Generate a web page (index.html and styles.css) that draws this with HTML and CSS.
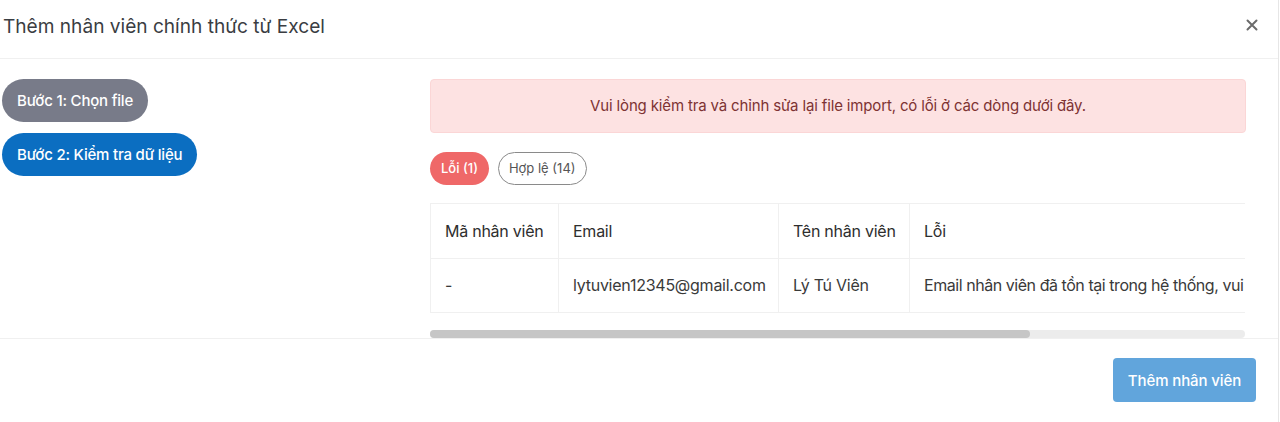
FILE: index.html
```html
<!DOCTYPE html>
<html lang="vi">
<head>
<meta charset="utf-8">
<title>Thêm nhân viên chính thức từ Excel</title>
<link rel="stylesheet" href="styles.css">
</head>
<body>
<div class="modal">
  <header class="modal-header">
    <h1 class="modal-title">Thêm nhân viên chính thức từ Excel</h1>
    <button class="close" aria-label="Đóng">
      <svg width="12" height="12" viewBox="0 0 12 12"><path d="M1.5 1.5 L10.5 10.5 M10.5 1.5 L1.5 10.5" stroke="#6b6b6b" stroke-width="2" stroke-linecap="round"/></svg>
    </button>
  </header>
  <section class="modal-body">
    <nav class="steps">
      <div class="step step-done">Bước 1: Chọn file</div>
      <div class="step step-active">Bước 2: Kiểm tra dữ liệu</div>
    </nav>
    <div class="content">
      <div class="alert">Vui lòng kiểm tra và chỉnh sửa lại file import, có lỗi ở các dòng dưới đây.</div>
      <div class="tabs">
        <span class="tab tab-error">Lỗi (1)</span>
        <span class="tab tab-valid">Hợp lệ (14)</span>
      </div>
      <div class="table-scroll">
        <table class="grid">
          <colgroup>
            <col class="c1"><col class="c2"><col class="c3"><col class="c4">
          </colgroup>
          <thead>
            <tr><th>Mã nhân viên</th><th>Email</th><th>Tên nhân viên</th><th>Lỗi</th></tr>
          </thead>
          <tbody>
            <tr><td>-</td><td>lytuvien12345@gmail.com</td><td>Lý Tú Viên</td><td class="err">Email nhân viên đã tồn tại trong hệ thống, vui lòng kiểm tra lại.</td></tr>
          </tbody>
        </table>
      </div>
      <div class="scrollbar"><div class="scrollbar-thumb"></div></div>
    </div>
  </section>
  <footer class="modal-footer">
    <button class="btn-primary">Thêm nhân viên</button>
  </footer>
</div>
</body>
</html>
```

FILE: styles.css
```css
* { box-sizing: border-box; }
html, body { margin: 0; padding: 0; background: #fff; }
body {
  font-family: Inter, "Noto Sans", "Liberation Sans", sans-serif;
  color: #333;
  width: 1280px;
  height: 422px;
  overflow: hidden;
}
.modal {
  width: 1279px;
  height: 422px;
  border-right: 1px solid #e6e6e6;
  background: #fff;
  display: flex;
  flex-direction: column;
}
.modal-header {
  height: 59px;
  border-bottom: 1px solid #f0f0f0;
  display: flex;
  align-items: center;
  justify-content: space-between;
  padding: 0 20px 6px 3px;
  flex-shrink: 0;
}
.modal-title {
  margin: 0;
  font-size: 19.1px;
  font-weight: 400;
  color: #3a3d42;
  letter-spacing: 0;
}
.close {
  border: 0;
  background: none;
  padding: 0;
  width: 12px;
  height: 12px;
  display: flex;
  margin-bottom: 2px;
}
.modal-body {
  height: 280px;
  display: flex;
  padding: 20px 32px 0 2px;
  border-bottom: 1px solid #f0f0f0;
  overflow: hidden;
  flex-shrink: 0;
}
.steps {
  width: 428px;
  display: flex;
  flex-direction: column;
  align-items: flex-start;
  gap: 11px;
  flex-shrink: 0;
}
.step {
  height: 43px;
  border-radius: 22px;
  padding: 0 15px;
  display: flex;
  align-items: center;
  color: #fff;
  font-size: 15px;
  font-weight: 500;
  letter-spacing: -0.2px;
}
.step-done { background: #787b89; }
.step-active { background: #0b6ec1; }
.content {
  width: 817px;
  display: flex;
  flex-direction: column;
}
.alert {
  height: 54px;
  background: #fde2e2;
  border: 1px solid #fbd6d6;
  border-radius: 4px;
  color: #7d3333;
  font-size: 15px;
  display: flex;
  align-items: center;
  justify-content: center;
  letter-spacing: -0.15px;
}
.tabs {
  display: flex;
  gap: 9px;
  margin-top: 19px;
}
.tab {
  height: 33px;
  border-radius: 17px;
  font-size: 13px;
  display: flex;
  align-items: center;
  padding: 0 11px;
}
.tab-error { background: #ef6868; color: #fff; font-weight: 500; }
.tab-valid { border: 1px solid #8a8a8a; color: #555; padding: 0 10px; }
.table-scroll {
  margin-top: 18px;
  width: 815px;
  overflow: hidden;
}
.grid {
  border-collapse: collapse;
  table-layout: fixed;
  width: 1107px;
  margin-bottom: 18px;
  font-size: 16px;
}
.c1 { width: 128px; }
.c2 { width: 220px; }
.c3 { width: 131px; }
.c4 { width: 628px; }
.grid th, .grid td {
  border: 1px solid #f0f0f0;
  text-align: left;
  padding: 0 14px;
  white-space: nowrap;
  overflow: hidden;
  color: #3a3a3a;
  letter-spacing: -0.25px;
}
.grid th { height: 55px; font-weight: 400; color: #2e2e2e; }
.grid td { height: 54px; font-weight: 400; }
.grid td.err { letter-spacing: -0.45px; }
.scrollbar {
  width: 815px;
  height: 8px;
  border-radius: 4px;
  background: #ececec;
  display: flex;
}
.scrollbar-thumb {
  width: 600px;
  height: 8px;
  border-radius: 4px;
  background: #c6c6c6;
}
.modal-footer {
  flex: 1;
  display: flex;
  justify-content: flex-end;
  align-items: flex-start;
  padding: 19px 22px 0 0;
}
.btn-primary {
  height: 44px;
  width: 143px;
  border: 0;
  border-radius: 4px;
  background: #61a5dc;
  color: #fff;
  font-family: inherit;
  font-size: 15px;
  font-weight: 500;
  letter-spacing: -0.1px;
}
```
